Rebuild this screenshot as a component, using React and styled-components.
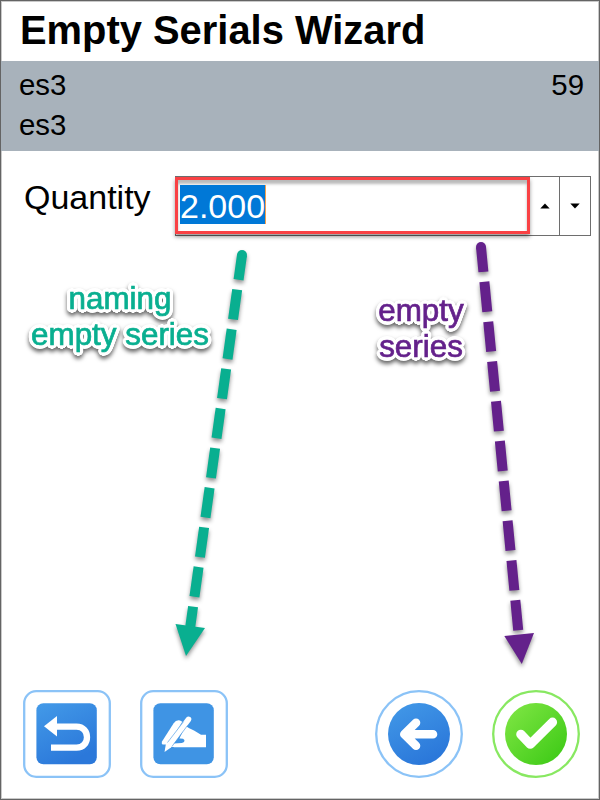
import React from "react";
import styled, { createGlobalStyle } from "styled-components";

const GlobalStyle = createGlobalStyle`
  *, *::before, *::after { box-sizing: border-box; }
  html, body { margin: 0; padding: 0; background: #fff; }
  body { font-family: "Liberation Sans", Arial, sans-serif; color: #000; }
`;

const Window = styled.main`
  position: relative;
  display: flex;
  flex-direction: column;
  width: 600px;
  height: 800px;
  background: #fff;
  border: 1px solid #646464;
  box-shadow: inset 0 0 0 1px #c9c9c9;
  overflow: hidden;
`;

const TitleBar = styled.header`
  flex: none;
  height: 60px;
  padding: 6px 0 0 19px;
`;

const Title = styled.h1`
  margin: 0;
  font-size: 39.9px;
  font-weight: 700;
  line-height: 46px;
  white-space: nowrap;
`;

const InfoPanel = styled.section`
  flex: none;
  display: flex;
  justify-content: space-between;
  height: 90px;
  padding: 4px 15px 0 18px;
  background: #a8b2bb;
  font-size: 29.4px;
  line-height: 40px;
`;

const InfoColumn = styled.div`
  display: flex;
  flex-direction: column;
`;

const QuantityRow = styled.section`
  flex: none;
  display: flex;
  padding: 25px 0 0 23px;
`;

const QuantityLabel = styled.label`
  width: 151px;
  font-size: 34px;
  line-height: 43px;
`;

const Spinner = styled.div`
  display: flex;
  width: 416px;
  height: 60px;
  border: 1px solid #6e6e6e;
`;

const FieldFrame = styled.div`
  flex: none;
  display: flex;
  align-items: flex-start;
  width: 355px;
  height: 57px;
  margin: 0 0 0 -1px;
  padding: 5px 0 0 2px;
  border: 3px solid #f94144;
  box-shadow: 0 3px 4px rgba(0, 0, 0, 0.4), inset 0 4px 3px rgba(0, 0, 0, 0.27);
`;

const SelectedValue = styled.span`
  height: 39px;
  background: #0078d7;
  border-right: 1px solid #f5a04c;
  color: #fff;
  font-size: 34px;
  line-height: 42px;
`;

const StepButton = styled.button`
  flex: ${(p) => (p.$divided ? "1" : "0 0 29px")};
  display: flex;
  align-items: center;
  justify-content: center;
  padding: 0;
  border: 0;
  border-left: ${(p) => (p.$divided ? "1px solid #6e6e6e" : "0")};
  background: transparent;
`;

const Annotations = styled.svg`
  position: absolute;
  left: -1px;
  top: -1px;
  pointer-events: none;
  filter: drop-shadow(0 3px 2px rgba(0, 0, 0, 0.42));
`;

/* A solid white halo, built from rings of offset copies. */
const ring = (radius, count) =>
  Array.from({ length: count }, (_, i) => {
    const a = (i / count) * Math.PI * 2;
    return `${(Math.cos(a) * radius).toFixed(2)}px ${(Math.sin(a) * radius).toFixed(2)}px 0 #fff`;
  }).join(", ");
const halo = `${ring(2, 8)}, ${ring(3.6, 20)}`;

const Callout = styled.div`
  position: absolute;
  left: ${(p) => p.$x}px;
  top: ${(p) => p.$y}px;
  width: ${(p) => p.$w}px;
  color: ${(p) => p.$color};
  font-size: 31.4px;
  line-height: 36px;
  text-align: center;
  white-space: pre-line;
  -webkit-text-stroke: 0.7px ${(p) => p.$color};
  text-shadow: ${halo};
  filter: drop-shadow(0 3px 2px rgba(0, 0, 0, 0.6));
`;

const Footer = styled.footer`
  display: flex;
  justify-content: space-between;
  margin-top: auto;
  padding: 0 19px 21px 21.5px;
`;

const ButtonGroup = styled.div`
  display: flex;
  gap: 29px;
`;

const ActionButton = styled.button`
  display: flex;
  width: 88px;
  height: 88px;
  padding: 0;
  border: 0;
  background: transparent;
`;

function Arrow({ color, x, y, d, head }) {
  return (
    <g fill={color}>
      <circle cx={x} cy={y} r="5" />
      <path d={d} stroke={color} strokeWidth="10" strokeDasharray="30 10" strokeDashoffset="5" />
      <path d={head} />
    </g>
  );
}

function IconDefs() {
  return (
    <defs>
      <linearGradient id="blue" x1="0" y1="0" x2="0.5" y2="1">
        <stop offset="0" stopColor="#439ae8" />
        <stop offset="1" stopColor="#2b78da" />
      </linearGradient>
      <linearGradient id="green" x1="0.1" y1="0.1" x2="0.9" y2="0.9">
        <stop offset="0" stopColor="#7be441" />
        <stop offset="1" stopColor="#40cb18" />
      </linearGradient>
    </defs>
  );
}

function SquareIcon({ fill, children }) {
  return (
    <svg width="88" height="88" viewBox="0 0 88 88">
      <rect x="1.2" y="1.2" width="85.6" height="85.6" rx="12" fill="#fff" stroke="#8bc3f7" strokeWidth="2.3" />
      <rect x="13.4" y="13.3" width="60.4" height="61" rx="7" fill={fill} />
      {children}
    </svg>
  );
}

function RoundIcon({ ringColor, fill, children }) {
  return (
    <svg width="88" height="88" viewBox="0 0 88 88">
      <circle cx="44" cy="44" r="42.8" fill="#fff" stroke={ringColor} strokeWidth="2.3" />
      <circle cx="44" cy="44" r="31" fill={fill} />
      {children}
    </svg>
  );
}

export default function App() {
  return (
    <>
      <GlobalStyle />
      <Window>
        <TitleBar>
          <Title>Empty Serials Wizard</Title>
        </TitleBar>
        <InfoPanel>
          <InfoColumn>
            <span>es3</span>
            <span>es3</span>
          </InfoColumn>
          <span>59</span>
        </InfoPanel>
        <QuantityRow>
          <QuantityLabel>Quantity</QuantityLabel>
          <Spinner>
            <FieldFrame>
              <SelectedValue>2.000</SelectedValue>
            </FieldFrame>
            <StepButton aria-label="Increase">
              <svg width="10" height="6"><path d="M.3 5.5 5 .5l4.7 5z" /></svg>
            </StepButton>
            <StepButton $divided aria-label="Decrease">
              <svg width="10" height="6"><path d="M.3.5h9.4L5 5.5z" /></svg>
            </StepButton>
          </Spinner>
        </QuantityRow>
        <Footer>
          <ButtonGroup>
            <ActionButton aria-label="Undo">
              <SquareIcon fill="url(#blue)">
                <IconDefs />
                <path d="M32 36.6H53.5C67.5 36.6 67.5 57.7 53.5 57.7H28" fill="none" stroke="#fff" strokeWidth="6.3" />
                <path d="M21 36.2 34 26v20.4z" fill="#fff" />
              </SquareIcon>
            </ActionButton>
            <ActionButton aria-label="Name serials">
              <SquareIcon fill="#3f94e4">
                <g fill="#fff">
                  <path d="M22 51.5 33.5 33.5q2.5-3.8 6.5-3l2.3 1.2L28 54.5h-5.5q-1.4-1.2-.5-3z" />
                  <path d="m25.8 54.5 20.6-27q1.6-1.9 3.8-.5 2.1 1.6.6 3.9L31 57.5l-6.5 4.5z" />
                  <path d="M45.5 35.8q2.6 2.4 8.5 4.6L61 44.7h5V57.3H34.2l-3-.9 2.3-3 8.3-.4q3-.8 2.6-3.1-.8-1.6-5-1.4z" />
                </g>
                <path d="M27.5 52.5 43.6 31.6M32.3 56 47.5 35.5" fill="none" stroke="#3f94e4" strokeWidth=".6" />
              </SquareIcon>
            </ActionButton>
          </ButtonGroup>
          <ButtonGroup>
            <ActionButton aria-label="Back">
              <RoundIcon ringColor="#8bc3f7" fill="url(#blue)">
                <path d="M41 32.7 29.3 44.2 41 55.7M30.5 44.2H58" fill="none" stroke="#fff" strokeWidth="8.6" strokeLinecap="round" strokeLinejoin="round" />
              </RoundIcon>
            </ActionButton>
            <ActionButton aria-label="Confirm">
              <RoundIcon ringColor="#88e861" fill="url(#green)">
                <path d="M28.8 44.3 38.3 54.2 60.5 32.2" fill="none" stroke="#fff" strokeWidth="9.2" strokeLinecap="round" strokeLinejoin="round" />
              </RoundIcon>
            </ActionButton>
          </ButtonGroup>
        </Footer>
        <Annotations width="600" height="800" viewBox="0 0 600 800">
          <Arrow color="#09af90" x={242} y={255} d="M242 255 190.3 626.5" head="M175.5 624 205 628 186 656z" />
          <Arrow color="#64218b" x={481} y={247} d="M481 247 518.3 631" head="M504.3 636 534 633 521.8 664z" />
        </Annotations>
        <Callout $x={19} $y={280} $w={200} $color="#09af90">{"naming\nempty series"}</Callout>
        <Callout $x={360} $y={292} $w={120} $color="#64218b">{"empty\nseries"}</Callout>
      </Window>
    </>
  );
}
